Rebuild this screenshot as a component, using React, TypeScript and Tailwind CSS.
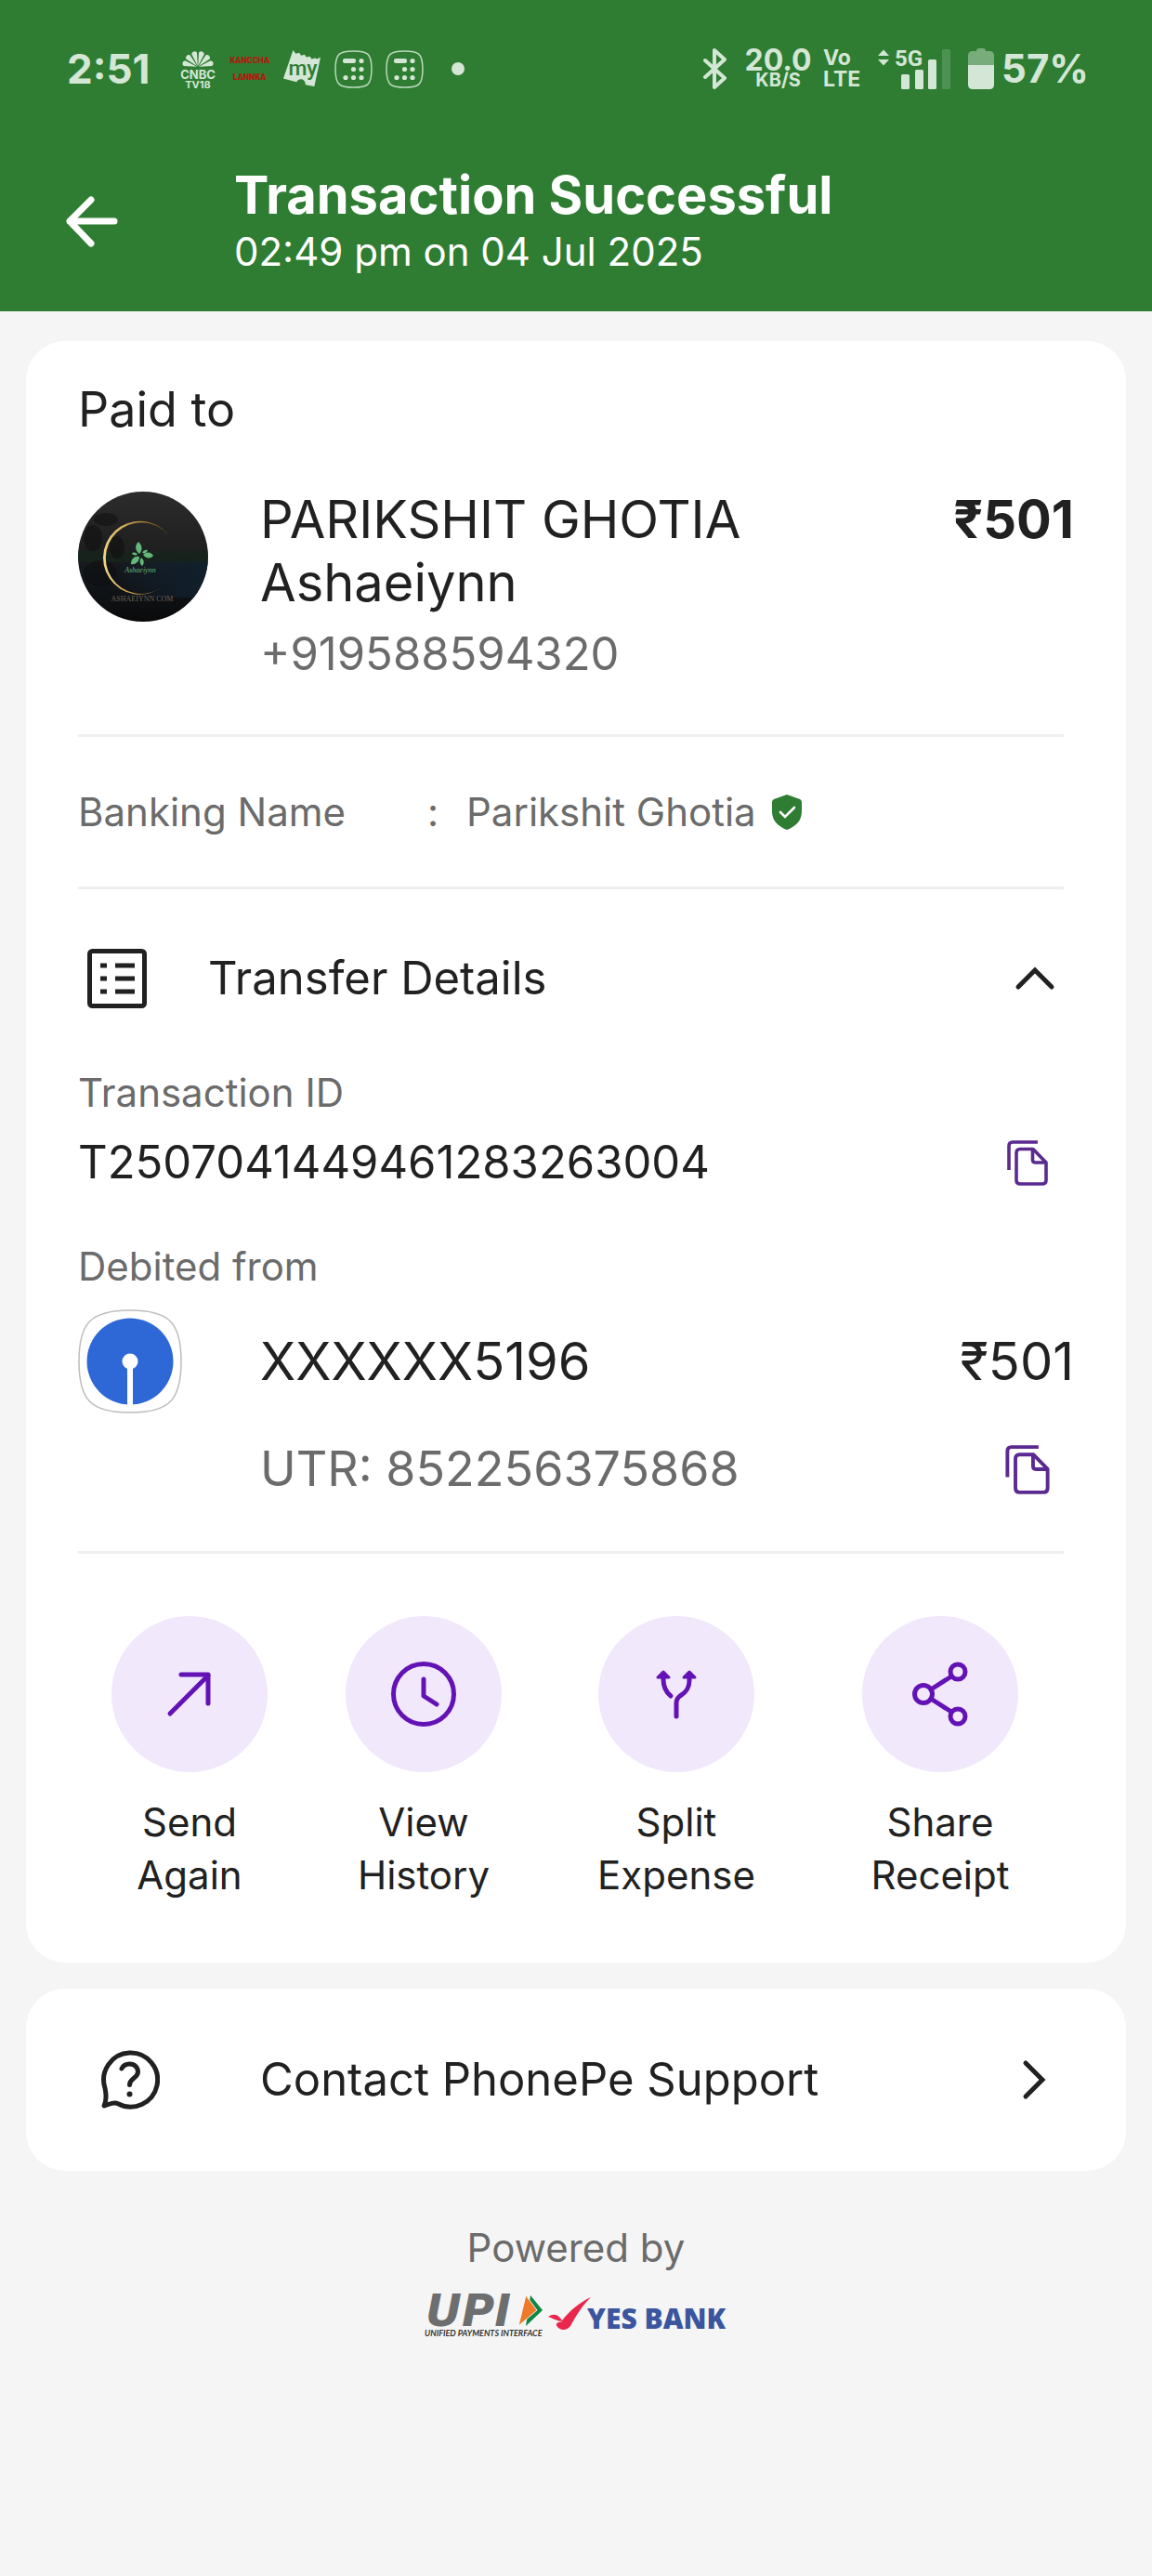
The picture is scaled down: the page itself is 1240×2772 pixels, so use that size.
import { useState, type ReactNode } from "react";

function StatusIconsLeft() {
  return (
    <div className="flex items-center gap-[14px]">
      <svg className="h-[42px] w-[42px] overflow-visible" viewBox="0 0 42 42" fill="#d4e6d5" aria-label="CNBC TV18">
        {[-75, -45, -15, 15, 45, 75].map((angle) => (
          <path key={angle} d="M21 18 L18 4 A3.2 3.2 0 0 1 24 4 Z" transform={`rotate(${angle} 21 19)`} />
        ))}
        <text x="21" y="31.5" textAnchor="middle" fontFamily="Inter" fontWeight="700" fontSize="13">CNBC</text>
        <text x="21" y="41.5" textAnchor="middle" fontFamily="Inter" fontWeight="700" fontSize="11">TV18</text>
      </svg>
      <div className="flex h-[42px] w-[42px] flex-col justify-center text-center font-[Roboto] text-[9px] leading-[18px] font-black text-[#b01a0d]">
        <span>KANCCHA</span>
        <span>LANNKA</span>
      </div>
      <svg className="h-[42px] w-[42px] overflow-visible" viewBox="0 0 44 42" aria-label="my">
        <path
          d="M12 0 l3 4 l4 -1 l2 3 l4 -1 l2 3 l4 -1 l2 3 l4 -1 l2 1 l4 -2 L36 41 l-10 -2 c0 -7 -8 -8 -10 -3 L1 32 Z"
          fill="#d4e6d5"
        />
        <text x="23" y="28" textAnchor="middle" fontFamily="Roboto" fontWeight="500" fontSize="24" fill="#2e7d32">my</text>
      </svg>
      <CalculatorIcon />
      <CalculatorIcon />
      <span className="ml-4 h-[14px] w-[14px] rounded-full bg-[#d4e6d5]" />
    </div>
  );
}

function CalculatorIcon() {
  return (
    <svg className="h-[41px] w-[41px]" viewBox="0 0 41 41" fill="#d4e6d5" aria-hidden="true">
      <path
        d="M20.5 1 C35 1 40 3 40 20.5 C40 38 35 40 20.5 40 C6 40 1 38 1 20.5 C1 3 6 1 20.5 1 Z"
        fill="none"
        stroke="#bcd8bd"
        strokeWidth="1.5"
      />
      <rect x="9" y="9" width="14" height="5" rx="2" />
      <circle cx="29" cy="11.5" r="2.6" />
      <circle cx="20.5" cy="20.5" r="2.6" />
      <circle cx="29" cy="20.5" r="2.6" />
      <circle cx="12" cy="29.5" r="2.6" />
      <circle cx="20.5" cy="29.5" r="2.6" />
      <circle cx="29" cy="29.5" r="2.6" />
    </svg>
  );
}

function StatusBar() {
  return (
    <div className="flex h-[148px] items-center justify-between pr-[68px] pl-[72px] text-[#d4e6d5]">
      <div className="flex items-center gap-[30px]">
        <span className="text-[44px] leading-[48px] font-bold">2:51</span>
        <StatusIconsLeft />
      </div>
      <div className="flex items-center">
        <svg className="h-[44px] w-[26px]" viewBox="0 0 26 44" fill="none" stroke="#d4e6d5" strokeWidth="4" strokeLinejoin="round" strokeLinecap="round" aria-label="Bluetooth">
          <path d="M2 13 L23 32 L12 42 V2 L23 12 L2 31" />
        </svg>
        <div className="ml-[20px] flex w-[69px] flex-col items-center font-bold">
          <span className="text-[32px] leading-[25px]">20.0</span>
          <span className="text-[20px] leading-[19px]">KB/S</span>
        </div>
        <div className="ml-[14px] flex w-[42px] flex-col text-[23px] leading-[23px] font-bold">
          <span>Vo</span>
          <span>LTE</span>
        </div>
        <svg className="ml-[16px] h-[44px] w-[80px] overflow-visible" viewBox="0 0 80 44" fill="#d4e6d5" aria-label="5G signal">
          <path d="M1 8 L7 1.5 L13 8 Z M1 12 L7 18.5 L13 12 Z" />
          <text x="19" y="19" fontFamily="Roboto" fontWeight="700" fontSize="24">5G</text>
          <rect x="26" y="28" width="9" height="16" rx="1.5" />
          <rect x="41" y="23" width="9" height="21" rx="1.5" />
          <rect x="55" y="12" width="9" height="32" rx="1.5" />
          <rect x="70" y="1" width="9" height="43" rx="1.5" opacity="0.2" />
        </svg>
        <svg className="ml-[18px] h-[44px] w-[28px]" viewBox="0 0 28 44" fill="#d4e6d5" aria-label="Battery">
          <path d="M9 3 Q9 0 12 0 H16 Q19 0 19 3 H23 Q28 3 28 8 V18 H0 V8 Q0 3 5 3 Z" opacity="0.45" />
          <path d="M0 18 H28 V39 Q28 44 23 44 H5 Q0 44 0 39 Z" />
        </svg>
        <span className="ml-[8px] text-[42px] leading-[48px] font-bold">57%</span>
      </div>
    </div>
  );
}

function MerchantAvatar() {
  return (
    <svg className="h-[140px] w-[140px] shrink-0" viewBox="0 0 140 140" role="img" aria-label="Ashaeiynn">
      <defs>
        <linearGradient id="night" x1="0" y1="0" x2="0" y2="1">
          <stop offset="0" stopColor="#2c2c2c" />
          <stop offset="0.45" stopColor="#1f1f1f" />
          <stop offset="0.6" stopColor="#14191f" />
          <stop offset="1" stopColor="#0a0a0a" />
        </linearGradient>
        <linearGradient id="sea" x1="0" y1="0" x2="1" y2="0">
          <stop offset="0.3" stopColor="#122030" stopOpacity="0" />
          <stop offset="1" stopColor="#10202c" />
        </linearGradient>
        <linearGradient id="gold" x1="0" y1="0" x2="1" y2="0">
          <stop offset="0" stopColor="#f3d687" />
          <stop offset="0.5" stopColor="#b98d3c" />
          <stop offset="1" stopColor="#5a4520" />
        </linearGradient>
        <clipPath id="round">
          <circle cx="70" cy="70" r="70" />
        </clipPath>
      </defs>
      <g clipPath="url(#round)">
        <rect width="140" height="140" fill="url(#night)" />
        <rect y="64" width="140" height="12" fill="#14281a" opacity="0.5" />
        <rect y="76" width="140" height="38" fill="url(#sea)" />
        <g fill="#0d0d0d" opacity="0.5">
          <ellipse cx="30" cy="30" rx="13" ry="7" />
          <ellipse cx="16" cy="50" rx="10" ry="14" />
          <ellipse cx="42" cy="60" rx="8" ry="12" />
          <ellipse cx="24" cy="88" rx="18" ry="14" />
        </g>
        <path d="M101 52 A39.5 39.5 0 1 0 90 103 A38.3 38.3 0 1 1 101 52 Z" fill="url(#gold)" />
        <g fill="#63b77b">
          <path d="M66 67 C60 62 62 57 65 54 C69 58 70 62 66 67 Z" />
          <path d="M70 68 C74 64 79 65 81 69 C77 73 73 72 70 68 Z" />
          <path d="M66 70 C66 76 61 79 57 78 C57 72 61 69 66 70 Z" />
          <path d="M68 71 C72 74 71 78 69 80 C66 77 66 74 68 71 Z" />
          <path d="M64 68 C61 69 58 68 58 66 C60 65 63 65 64 68 Z" />
          <path d="M69 66 C70 63 73 62 75 63 C74 66 72 67 69 66 Z" />
        </g>
        <text x="67" y="87" textAnchor="middle" fontFamily="Liberation Serif" fontStyle="italic" fontSize="8" fill="#63b77b">Ashaeiynn</text>
        <text x="69" y="118" textAnchor="middle" fontFamily="Liberation Serif" fontSize="8" fill="#6d6257">ASHAEIYNN COM</text>
      </g>
    </svg>
  );
}

function BankLogo() {
  return (
    <svg className="h-[112px] w-[112px] shrink-0" viewBox="0 0 112 112" role="img" aria-label="State Bank of India">
      <path
        d="M56 1 C98 1 111 14 111 56 C111 98 98 111 56 111 C14 111 1 98 1 56 C1 14 14 1 56 1 Z"
        fill="#fff"
        stroke="#bdbdbd"
        strokeWidth="1.5"
      />
      <circle cx="56" cy="56" r="46.5" fill="#2e68d6" />
      <circle cx="56" cy="56" r="8.5" fill="#fff" />
      <rect x="53" y="60" width="6" height="44" fill="#fff" />
    </svg>
  );
}

function CopyIcon({ className }: { className: string }) {
  return (
    <svg className={className} viewBox="0 0 44 49" fill="none" stroke="#5b2a90" strokeWidth="3.6" strokeLinejoin="round" aria-hidden="true">
      <path d="M33 2 H6 Q2 2 2 6 V32" />
      <path d="M28 9.5 H14 Q10 9.5 10 13.5 V43 Q10 47 14 47 H38 Q42 47 42 43 V24 Z" />
      <path d="M27.5 10 V21 Q27.5 24 30.5 24 H41" />
    </svg>
  );
}

const actions: { label: [string, string]; icon: ReactNode }[] = [
  {
    label: ["Send", "Again"],
    icon: (
      <>
        <path d="M63 105 L104 64" />
        <path d="M75 63 H104 V94" />
      </>
    ),
  },
  {
    label: ["View", "History"],
    icon: (
      <>
        <circle cx="84" cy="84" r="32.5" />
        <path d="M84 68 V86 L98 95" />
      </>
    ),
  },
  {
    label: ["Split", "Expense"],
    icon: (
      <>
        <path d="M70 62 V68 C70 77 73 82 78 86" />
        <path d="M98 62 V69 C98 79 93 83 88 86 C85 88 84 91 84 94 V108" />
        <path d="M64 66 L70 60 L76 66 Z M92 66 L98 60 L104 66 Z" fill="#6312b6" strokeWidth="3" />
      </>
    ),
  },
  {
    label: ["Share", "Receipt"],
    icon: (
      <>
        <circle cx="66" cy="84" r="9.5" />
        <circle cx="103" cy="60" r="8" />
        <circle cx="103" cy="108" r="8" />
        <path d="M74 79 L96 65 M74 89 L96 103" />
      </>
    ),
  },
];

function Divider() {
  return <hr className="mr-[11px] h-[3px] border-0 bg-[#efefef]" />;
}

function PaymentLogos() {
  return (
    <div className="mt-[23px] flex h-[46px] items-start justify-center gap-[5px]">
      <svg className="h-[46px] w-[128px] overflow-visible" viewBox="0 0 128 46" role="img" aria-label="UPI Unified Payments Interface">
        <text x="1" y="33" fontFamily="DejaVu Sans" fontWeight="700" fontStyle="oblique" fontSize="48" fill="#6d6e70">UPI</text>
        <path d="M114 0 L127 16 L109 33 Z" fill="#0f8643" />
        <path d="M109 0 L121 16 L101 33 Z" fill="#ee7a29" stroke="#f5f5f5" strokeWidth="1" />
        <text x="0" y="44" fontFamily="Lato" fontWeight="700" fontStyle="italic" fontSize="9" fill="#333">UNIFIED PAYMENTS INTERFACE</text>
      </svg>
      <svg className="h-[46px] w-[194px]" viewBox="0 0 194 46" role="img" aria-label="YES BANK">
        <path d="M0 23 C7 18 12 22 15 27 C24 16 33 8 46 2 C36 12 30 22 24 33 C20 38 14 38 10 34 C8 31 8 29 16 28 C10 28 6 25 0 23 Z" fill="#e9274c" />
        <text x="42" y="36" fontFamily="Open Sans" fontWeight="800" fontSize="30" fill="#3b559f">YES BANK</text>
      </svg>
    </div>
  );
}

export default function App() {
  const [open, setOpen] = useState(true);

  return (
    <div className="min-h-screen bg-[#f5f5f5] font-[Inter,sans-serif] text-[#212121]">
      <header className="bg-[#2e7d32]">
        <StatusBar />
        <div className="flex items-center gap-[124px] px-[70px] pt-[30px] pb-[35px] text-white">
          <button type="button" aria-label="Back">
            <svg className="h-[56px] w-[58px]" viewBox="0 0 58 56" fill="none" stroke="currentColor" strokeWidth="7" strokeLinecap="round" strokeLinejoin="round">
              <path d="M53 27 H5 M28 4 L5 27 L28 51" />
            </svg>
          </button>
          <div>
            <h1 className="text-[56px] leading-[64px] font-bold">Transaction Successful</h1>
            <p className="text-[42px] leading-[58px]">02:49 pm on 04 Jul 2025</p>
          </div>
        </div>
      </header>

      <main className="px-7 pt-8">
        <section className="rounded-[42px] bg-white px-14 pt-[42px] pb-[66px]">
          <h2 className="text-[52px] leading-[64px]">Paid to</h2>

          <div className="mt-[52px] flex items-start">
            <div className="pt-1">
              <MerchantAvatar />
            </div>
            <div className="ml-14 flex-1">
              <p className="text-[56px] leading-[68px]">
                PARIKSHIT GHOTIA
                <br />
                Ashaeiynn
              </p>
              <p className="mt-[13px] text-[49px] leading-[60px] text-[#6b6b6b]">+919588594320</p>
            </div>
            <p className="text-[56px] leading-[68px] font-bold">₹501</p>
          </div>

          <div className="mt-14">
            <Divider />
          </div>

          <dl className="flex items-center py-[52px] text-[42px] leading-[57px] text-[#6b6b6b]">
            <dt className="w-[376px]">Banking Name</dt>
            <dd className="flex items-center">
              <span className="w-[42px]">:</span>
              <span>Parikshit Ghotia</span>
              <svg className="ml-4 h-[38px] w-[34px]" viewBox="0 0 34 38" role="img" aria-label="Verified">
                <path d="M17 0 L31 5 Q33 6 33 8 V18 C33 28 27 34 17 38 C7 34 1 28 1 18 V8 Q1 6 3 5 Z" fill="#2e7d32" />
                <path d="M10 19 L15 24 L25 14" fill="none" stroke="#fff" strokeWidth="2.6" strokeLinecap="round" />
              </svg>
            </dd>
          </dl>

          <Divider />

          <button
            type="button"
            aria-expanded={open}
            onClick={() => setOpen(!open)}
            className="flex w-full items-center pt-[66px] pr-[20px] pb-[64px] pl-[10px] text-left text-[49px] leading-[60px]"
          >
            <svg className="-my-[2px] h-[64px] w-[64px]" viewBox="0 0 64 64" fill="none" stroke="#212121" strokeWidth="5" aria-hidden="true">
              <rect x="2.5" y="2.5" width="59" height="59" rx="3" />
              <path d="M14 18 H21 M30 18 H51 M14 32 H21 M30 32 H51 M14 46 H21 M30 46 H51" />
            </svg>
            <span className="ml-[66px] flex-1">Transfer Details</span>
            <svg className={open ? "h-[26px] w-[44px]" : "h-[26px] w-[44px] rotate-180"} viewBox="0 0 44 26" fill="none" stroke="#212121" strokeWidth="5" strokeLinecap="round" aria-hidden="true">
              <path d="M4 22 L22 4 L40 22" />
            </svg>
          </button>

          {open && (
            <div>
              <h3 className="text-[42px] leading-[57px] text-[#6b6b6b]">Transaction ID</h3>
              <div className="mt-[17px] flex items-center justify-between pr-7">
                <p className="text-[49px] leading-[60px]">T2507041449461283263004</p>
                <button type="button" aria-label="Copy transaction ID">
                  <CopyIcon className="h-[49px] w-[44px]" />
                </button>
              </div>

              <h3 className="mt-[53px] text-[42px] leading-[57px] text-[#6b6b6b]">Debited from</h3>
              <div className="mt-[18px] flex items-center text-[56px] leading-[68px]">
                <BankLogo />
                <p className="ml-[84px] flex-1">XXXXXX5196</p>
                <p>₹501</p>
              </div>
              <div className="mt-[26px] flex items-center justify-between pr-[26px] pl-[196px]">
                <p className="text-[52px] leading-[68px] text-[#6b6b6b]">UTR: 852256375868</p>
                <button type="button" aria-label="Copy UTR">
                  <CopyIcon className="h-[53px] w-[48px]" />
                </button>
              </div>
            </div>
          )}

          <div className="mt-[54px]">
            <Divider />
          </div>

          <div className="mt-[67px] mr-[6px] -ml-[6px] grid grid-cols-[63fr_63fr_73fr_69fr]">
            {actions.map(({ label, icon }) => (
              <button key={label[1]} type="button" className="flex flex-col items-center text-[42px] leading-[57px]">
                <svg
                  className="h-[168px] w-[168px] rounded-full bg-[#f1e8fb]"
                  viewBox="0 0 168 168"
                  fill="none"
                  stroke="#6312b6"
                  strokeWidth="5"
                  strokeLinecap="round"
                  strokeLinejoin="round"
                  aria-hidden="true"
                >
                  {icon}
                </svg>
                <span className="mt-[25px]">
                  {label[0]}
                  <br />
                  {label[1]}
                </span>
              </button>
            ))}
          </div>
        </section>

        <a href="#support" className="mt-7 flex items-center rounded-[42px] bg-white py-[68px] pr-[84px] pl-20 text-[49px] leading-[60px]">
          <svg className="-my-[2px] h-[64px] w-[64px]" viewBox="0 0 64 64" fill="none" stroke="#212121" strokeWidth="5" strokeLinecap="round" strokeLinejoin="round" aria-hidden="true">
            <path d="M4 60 C7 54 6.5 48 5 41 A29 29 0 1 1 19 57.7 C14 55.5 10 58.5 4 60 Z" />
            <path d="M23 20 C25 16 28 15 31.5 15 C37 15 40.5 19 40.5 23.5 C40.5 30.5 31.5 30 31.5 37.5" />
            <path d="M31.5 47.5 V47.6" strokeWidth="6" />
          </svg>
          <span className="ml-[108px] flex-1">Contact PhonePe Support</span>
          <svg className="h-[44px] w-[28px]" viewBox="0 0 28 44" fill="none" stroke="#212121" strokeWidth="5" strokeLinecap="round" aria-hidden="true">
            <path d="M4 4 L22 22 L4 40" />
          </svg>
        </a>
      </main>

      <footer className="mt-[54px]">
        <p className="text-center text-[42px] leading-[57px] text-[#6b6b6b]">Powered by</p>
        <PaymentLogos />
      </footer>
    </div>
  );
}
